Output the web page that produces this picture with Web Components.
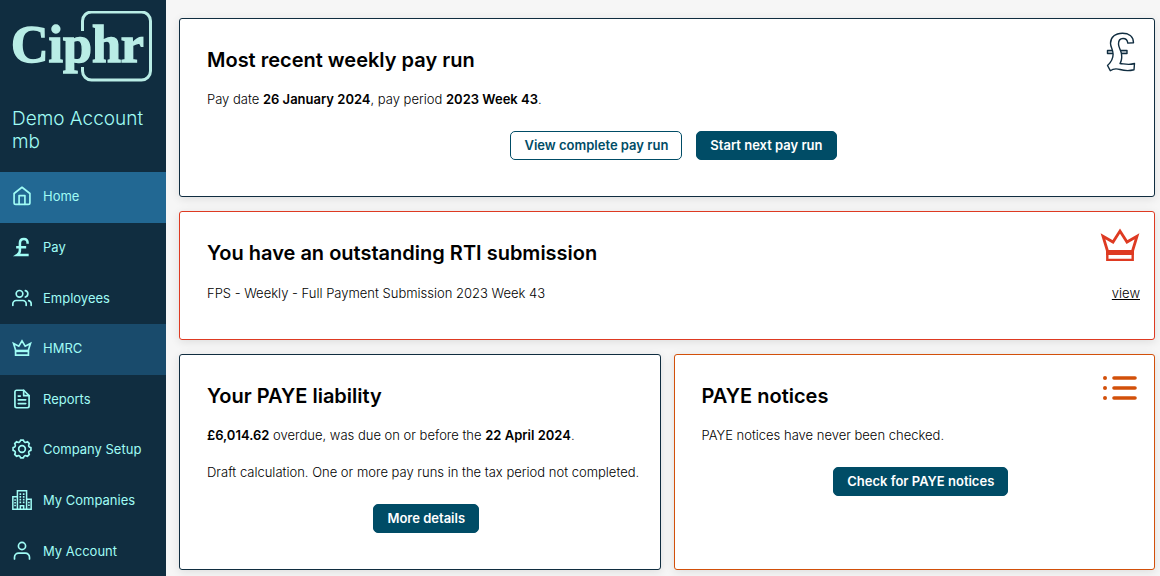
<!DOCTYPE html>
<html lang="en">
<head>
<meta charset="utf-8">
<meta name="viewport" content="width=device-width, initial-scale=1">
<title>Ciphr payroll</title>
<style>
body {
  margin: 0;
  font: 300 13px/20px Inter, "Liberation Sans", sans-serif;
  color: #000;
  background: #f6f6f6;
}
b {
  font-weight: 600;
}
p {
  margin: 0;
}
</style>
</head>
<body>
<payroll-app>
  <side-bar slot="sidebar" account="Demo Account mb">
    <nav-item icon="home" href="#home" state="current">Home</nav-item>
    <nav-item icon="pay" href="#pay">Pay</nav-item>
    <nav-item icon="users" href="#employees">Employees</nav-item>
    <nav-item icon="crown" href="#hmrc" state="hover">HMRC</nav-item>
    <nav-item icon="report" href="#reports">Reports</nav-item>
    <nav-item icon="gear" href="#setup">Company Setup</nav-item>
    <nav-item icon="buildings" href="#companies">My Companies</nav-item>
    <nav-item icon="user" href="#account">My Account</nav-item>
  </side-bar>

  <dash-card wide heading="Most recent weekly pay run" icon="pound-outline">
    <p>Pay date <b>26 January 2024</b>, pay period <b>2023 Week 43</b>.</p>
    <app-button slot="actions" variant="outline">View complete pay run</app-button>
    <app-button slot="actions">Start next pay run</app-button>
  </dash-card>

  <dash-card wide tone="alert" heading="You have an outstanding RTI submission" icon="crown-large">
    <submission-row href="#submission">FPS - Weekly - Full Payment Submission 2023 Week 43</submission-row>
  </dash-card>

  <dash-card heading="Your PAYE liability">
    <p><b>£6,014.62</b> overdue, was due on or before the <b>22 April 2024</b>.</p>
    <p>Draft calculation. One or more pay runs in the tax period not completed.</p>
    <app-button slot="actions">More details</app-button>
  </dash-card>

  <dash-card tone="notice" heading="PAYE notices" icon="list">
    <p>PAYE notices have never been checked.</p>
    <app-button slot="actions">Check for PAYE notices</app-button>
  </dash-card>
</payroll-app>

<script>
const line = 'fill="none" stroke="currentColor" stroke-width="2" stroke-linecap="round" stroke-linejoin="round"';

const icons = {
  home: `<svg viewBox="0 0 24 24" ${line}><path d="M2.5 9 12 1.500l9.500 7.500V20a2 2 0 0 1-2 2h-15a2 2 0 0 1-2-2z"/><path d="M8.500 22V11.500h7V22"/></svg>`,
  pay: `<svg viewBox="0 0 24 24" fill="none" stroke="currentColor" stroke-width="3"><path d="M18.800 8C18.800 4.500 17 2.500 14.300 2.500c-3 0-4.800 2-4.800 5V16c0 2.500-1 4.300-3 5.500H20M5 12.300h12"/></svg>`,
  users: `<svg viewBox="0 0 24 24" ${line}><path d="M17 21v-2a4 4 0 0 0-4-4H5a4 4 0 0 0-4 4v2"/><circle cx="9" cy="7" r="4"/><path d="M23 21v-2a4 4 0 0 0-3-3.870M16 3.130a4 4 0 0 1 0 7.750"/></svg>`,
  crown: `<svg viewBox="0 0 24 24" fill="none" stroke="currentColor" stroke-width="2"><path d="M4.300 14.500 1.800 6.500l6.400 3.300L12 3.500l3.800 6.300 6.400-3.300-2.500 8"/><path d="M3.300 15.500h17.400" stroke-width="3"/><path d="M4.300 16.500v4h15.400v-4"/></svg>`,
  report: `<svg viewBox="0 0 24 24" ${line}><path d="M14 1.500H5.500a2 2 0 0 0-2 2v17a2 2 0 0 0 2 2h13a2 2 0 0 0 2-2V8z"/><path d="M14 1.500V8h6.500M16.500 13h-9M16.500 17.500h-9M10 8.500H7.500"/></svg>`,
  gear: `<svg viewBox="0 0 24 24" ${line}><circle cx="12" cy="12" r="4"/><path d="M10.300 1.300h3.400Q14.600 5.600 18.400 3.200L20.800 5.600Q18.400 9.400 22.700 10.300V13.700Q18.400 14.600 20.800 18.400L18.400 20.800Q14.600 18.400 13.700 22.700H10.300Q9.400 18.400 5.600 20.800L3.200 18.400Q5.600 14.600 1.300 13.700V10.300Q5.600 9.400 3.200 5.600L5.600 3.200Q9.400 5.600 10.300 1.300z"/></svg>`,
  buildings: `<svg viewBox="0 0 24 24" fill="none" stroke="currentColor" stroke-width="1.800"><path d="M6.500 23V1h11v22M6.500 8H1v15h22V11h-5.500M10 23v-4h4v4"/><path d="M10 4v12M14 4v12" stroke-width="2" stroke-dasharray="2 1.300"/><path d="M3.700 11v10M20.300 14v7" stroke-width="2" stroke-dasharray="2 1.300"/></svg>`,
  user: `<svg viewBox="0 0 24 24" ${line}><path d="M21 21.500v-2a5 5 0 0 0-5-5H8a5 5 0 0 0-5 5v2"/><circle cx="12" cy="6" r="4.300"/></svg>`,
  "pound-outline": `<svg viewBox="0 0 40 40" fill="#fff" stroke="#102d40" stroke-width="1.400" stroke-linejoin="round"><path d="M7.500 18.500h19.500v3H7.500z" fill="#cdd5da"/><path d="M33.500 10.800C33.500 4 28.500 1.200 22.500 1.200 15 1.200 10.500 5.500 10.500 11.200c0 4 2.600 6.300 2.600 11 0 4.600-1.800 7.800-5.600 11.300l2.800 5.200c3-2.200 6.200-2.200 9.700-1.200 4.500 1.300 9 1.600 14 .3l.5-6.300c-5 1.800-8.500.7-14.500 0 1.600-2.600 2-6 1.500-9.500-.6-3.800-3-6.500-3-10 0-3.500 1.800-5.500 4.500-5.500 2.800 0 4.500 1.800 4.800 4.600z"/></svg>`,
  "crown-large": `<svg viewBox="0 0 40 40" fill="none" stroke="#de3a22" stroke-width="2.800"><path d="M7.500 26 3 11.300 13 17l7-11 7 11 10-5.700L32.500 26"/><path d="M6 27.500h28" stroke-width="5"/><path d="M7.300 29v5.900h25.400V29" stroke-width="2.400"/></svg>`,
  list: `<svg viewBox="0 0 40 40" fill="#d2500a" stroke="#d2500a" stroke-width="3.600" stroke-linecap="round"><path d="M14 10h21M14 20h21M14 30h21"/><g stroke="none"><circle cx="5" cy="10" r="2"/><circle cx="5" cy="20" r="2"/><circle cx="5" cy="30" r="2"/></g></svg>`
};

function makeTemplate(html) {
  const template = document.createElement("template");
  template.innerHTML = html;
  return template;
}

class BaseElement extends HTMLElement {
  constructor() {
    super();
    this.attachShadow({ mode: "open" });
    this.shadowRoot.appendChild(this.constructor.template.content.cloneNode(true));
  }
}

class AppIcon extends BaseElement {
  static template = makeTemplate(`
<style>
:host { display: block; flex: none; width: 20px; height: 20px; }
div { height: 100%; }
svg { display: block; width: 100%; height: 100%; overflow: visible; }
</style>
<div aria-hidden="true"></div>
`);
  static observedAttributes = ["name"];

  attributeChangedCallback() {
    this.shadowRoot.querySelector("div").innerHTML = icons[this.getAttribute("name")] || "";
  }
}

class PayrollApp extends BaseElement {
  static template = makeTemplate(`
<style>
:host { display: flex; min-height: 100vh; }
main {
  flex: 1;
  display: grid;
  grid-template-columns: 1fr 1fr;
  align-content: start;
  gap: 14px 13px;
  padding: 18px 5px 7px 13px;
  box-sizing: border-box;
}
</style>
<slot name="sidebar"></slot>
<main><slot></slot></main>
`);
}

class CiphrLogo extends BaseElement {
  static template = makeTemplate(`
<style>
:host { display: block; }
svg { display: block; width: 142px; height: 72px; }
text { font: 700 52px "Liberation Serif", serif; fill: #b9ede6; stroke: #b9ede6; stroke-width: 1.400px; }
</style>
<svg viewBox="1 1 142 72" role="img" aria-label="Ciphr">
  <path d="M71.500 21V11a9 9 0 0 1 9-9h50a9 9 0 0 1 9 9v50a9 9 0 0 1-9 9h-50a9 9 0 0 1-9-9v-4" fill="none" stroke="#b9ede6" stroke-width="3"/>
  <text x="0" y="52">Ciphr</text>
</svg>
`);
}

class SideBar extends BaseElement {
  static template = makeTemplate(`
<style>
:host { display: flex; flex-direction: column; flex: none; width: 166px; background: #102d40; color: #a0fcf5; }
header { padding: 11px 12px 19px; }
p { margin: 24px 0 0; font-size: 19px; line-height: 23px; }
nav { flex: 1; display: flex; flex-direction: column; }
</style>
<header>
  <ciphr-logo></ciphr-logo>
  <p></p>
</header>
<nav aria-label="Main"><slot></slot></nav>
`);

  connectedCallback() {
    this.shadowRoot.querySelector("p").textContent = this.getAttribute("account");
  }
}

class NavItem extends BaseElement {
  static template = makeTemplate(`
<style>
:host { display: flex; flex: 1; max-height: 51px; }
a {
  flex: 1;
  display: flex;
  align-items: center;
  gap: 11px;
  padding: 13px 12px 15px;
  color: inherit;
  font-weight: 400;
  text-decoration: none;
  white-space: nowrap;
}
:host([state="current"]) a { background: #226893; }
:host([state="hover"]) a, a:hover { background: #194b6c; }
</style>
<a><app-icon></app-icon><span><slot></slot></span></a>
`);

  connectedCallback() {
    const link = this.shadowRoot.querySelector("a");
    link.href = this.getAttribute("href");
    if (this.getAttribute("state") === "current") {
      link.setAttribute("aria-current", "page");
    }
    this.shadowRoot.querySelector("app-icon").setAttribute("name", this.getAttribute("icon"));
  }
}

class DashCard extends BaseElement {
  static template = makeTemplate(`
<style>
:host {
  --edge: #102d40;
  display: block;
  padding: 13px 14px 36px 27px;
  border: 1px solid var(--edge);
  border-radius: 3px;
  background: #fff;
  box-shadow: 0 2px 10px rgba(0, 0, 0, .1);
}
:host([wide]) { grid-column: 1 / -1; }
:host([tone="alert"]) { --edge: #de3a22; }
:host([tone="notice"]) { --edge: #d2500a; }
header { display: flex; justify-content: space-between; align-items: start; }
h2 { margin: 14px 0 0; font-size: 20px; line-height: 28px; font-weight: 600; }
app-icon { width: 40px; height: 40px; }
.body { display: flex; flex-direction: column; gap: 17px; margin-top: 15px; }
.actions { display: flex; justify-content: center; flex-wrap: wrap; gap: 14px; margin-top: 22px; }
[hidden] { display: none; }
</style>
<header><h2></h2><app-icon></app-icon></header>
<div class="body"><slot></slot></div>
<div class="actions"><slot name="actions"></slot></div>
`);

  connectedCallback() {
    const root = this.shadowRoot;
    const icon = root.querySelector("app-icon");
    root.querySelector("h2").textContent = this.getAttribute("heading");
    if (this.hasAttribute("icon")) {
      icon.setAttribute("name", this.getAttribute("icon"));
    } else {
      icon.hidden = true;
    }
    root.querySelector(".actions").hidden = !this.querySelector("[slot=actions]");
  }
}

class SubmissionRow extends BaseElement {
  static template = makeTemplate(`
<style>
:host { display: flex; justify-content: space-between; gap: 14px; padding-top: 2px; line-height: 19px; }
a { color: inherit; }
</style>
<span><slot></slot></span>
<a>view</a>
`);

  connectedCallback() {
    this.shadowRoot.querySelector("a").href = this.getAttribute("href");
  }
}

class AppButton extends BaseElement {
  static template = makeTemplate(`
<style>
:host { display: block; }
button {
  display: block;
  padding: 4px 13px;
  border: 1px solid #004c66;
  border-radius: 5px;
  background: #004c66;
  color: #fff;
  font: inherit;
  font-weight: 600;
  line-height: 19px;
  cursor: pointer;
}
:host([variant="outline"]) button { background: #fff; color: #004c66; }
</style>
<button type="button"><slot></slot></button>
`);
}

customElements.define("app-icon", AppIcon);
customElements.define("ciphr-logo", CiphrLogo);
customElements.define("payroll-app", PayrollApp);
customElements.define("side-bar", SideBar);
customElements.define("nav-item", NavItem);
customElements.define("dash-card", DashCard);
customElements.define("submission-row", SubmissionRow);
customElements.define("app-button", AppButton);
</script>
</body>
</html>
